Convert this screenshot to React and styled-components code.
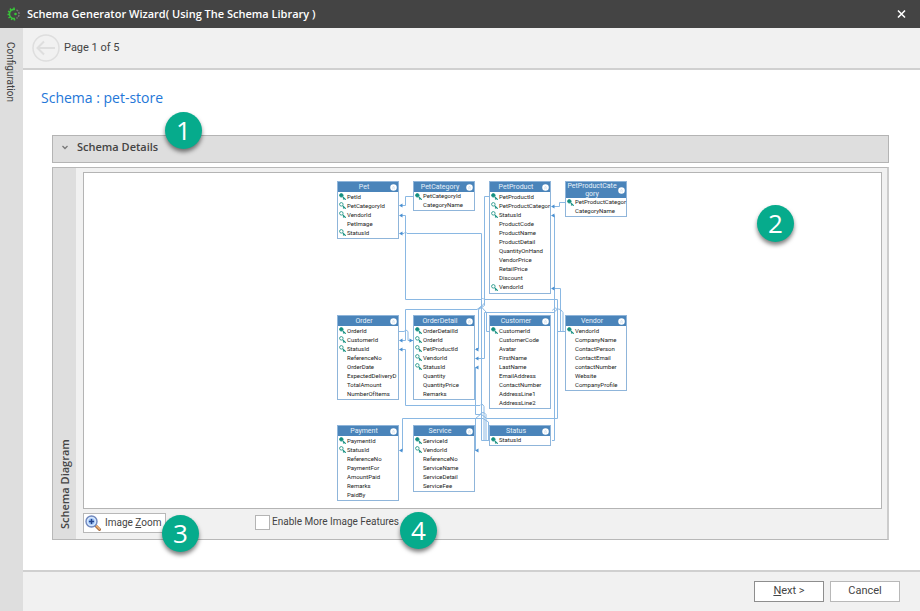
import React from "react";
import styled, { createGlobalStyle } from "styled-components";

const GlobalStyle = createGlobalStyle`
  *, *::before, *::after { box-sizing: border-box; }
  body {
    margin: 0;
    background: #fff;
    color: #444;
    font-family: Roboto, "Open Sans", sans-serif;
    font-size: 11px;
    line-height: 16px;
  }
  button, input { font: inherit; color: inherit; }
`;

const Window = styled.div`
  min-height: 100vh;
  display: flex;
  flex-direction: column;
`;

const TitleBar = styled.header`
  height: 28px;
  display: flex;
  align-items: center;
  gap: 6px;
  padding: 0 10px 0 7px;
  background: #444;
  color: #fff;
`;

const Title = styled.h1`
  flex: 1;
  margin: 0;
  font-family: "Open Sans", sans-serif;
  font-size: 11px;
  font-weight: 600;
`;

const IconButton = styled.button`
  display: flex;
  padding: 0;
  border: 0;
  background: none;
`;

const Workspace = styled.div`
  flex: 1;
  display: flex;
`;

const ConfigTab = styled.button`
  width: 23px;
  padding: 14px 3px 0 0;
  border: 0;
  background: #dedede;
  color: #444;
  font-size: 10px;
  writing-mode: vertical-rl;
  text-align: left;
  line-height: 20px;
`;

const Main = styled.main`
  flex: 1;
  min-width: 0;
  display: flex;
  flex-direction: column;
`;

const PageBar = styled.nav`
  height: 42px;
  display: flex;
  align-items: center;
  gap: 4px;
  padding: 0 9px;
  background: #f1f1f1;
  border-bottom: 2px solid #d0d0d0;
`;

const Content = styled.section`
  flex: 1;
  display: flex;
  flex-direction: column;
  padding: 18px 31px 30px 29px;
`;

const SchemaTitle = styled.h2`
  margin: 0 0 27px -11px;
  color: #2477d8;
  font-family: "Open Sans", sans-serif;
  font-size: 14px;
  font-weight: 400;
  line-height: 20px;
`;

const DetailsPanel = styled.div`
  position: relative;
  height: 28px;
  margin-bottom: 4px;
  border: 1px solid #b4b4b4;
  background: #dedede;
`;

const DetailsToggle = styled.button`
  width: 100%;
  height: 22px;
  display: flex;
  align-items: center;
  gap: 8px;
  padding: 0 8px;
  border: 0;
  background: none;
  font-family: "Open Sans", sans-serif;
  font-weight: 600;
`;

const DiagramPanel = styled.div`
  flex: 1;
  display: flex;
  border: 1px solid #b8b8b8;
  border-right: 2px solid #ccc;
  background: #f1f1f1;
`;

const DiagramTab = styled.div`
  width: 23px;
  padding-top: 10px;
  background: #dedede;
  font-family: "Open Sans", sans-serif;
  font-weight: 600;
  line-height: 23px;
  writing-mode: vertical-rl;
  transform: rotate(180deg);
`;

const DiagramBody = styled.div`
  flex: 1;
  min-width: 0;
  display: flex;
  flex-direction: column;
  padding: 4px 5px 6px 7px;
`;

const Canvas = styled.div`
  position: relative;
  flex: 1;
  display: flex;
  justify-content: center;
  padding: 7px 0 6px;
  border: 1px solid #b4b4b4;
  background: #fff;
`;

const Diagram = styled.div`
  position: relative;
  width: 291px;
  height: 322px;
`;

const Wires = styled.svg`
  position: absolute;
  inset: 0;
  fill: none;
  stroke: #8ab8e3;
`;

const EntityBox = styled.article`
  position: absolute;
  left: ${(p) => p.$x}px;
  top: ${(p) => p.$y}px;
  width: 62px;
  height: ${(p) => p.$h}px;
  display: flex;
  flex-direction: column;
  border: 1px solid #8fb5da;
  background: #fff;
`;

const EntityHeader = styled.header`
  flex: none;
  height: ${(p) => (p.$tall ? 16 : 10)}px;
  display: flex;
  align-items: center;
  padding-right: 1px;
  background: #4a84ba;
  color: #e8f1f9;
  font-size: 7px;
  line-height: 8px;
  text-align: center;
`;

const EntityName = styled.span`
  flex: 1;
  min-width: 0;
`;

const FieldList = styled.ul`
  flex: 1;
  display: flex;
  flex-direction: column;
  margin: 0;
  padding: 0 0 1px;
  list-style: none;
`;

const Field = styled.li`
  flex: 1;
  display: flex;
  align-items: center;
  gap: 1px;
  padding-left: 1px;
  color: #222;
  font-size: 6px;
  line-height: 8px;
  white-space: nowrap;
`;

const KeySlot = styled.svg`
  flex: none;
  width: 7px;
  height: 7px;
  stroke: #159080;
  fill: ${(p) => (p.$solid ? "#159080" : "none")};
`;

const Tools = styled.div`
  display: flex;
  align-items: flex-start;
  gap: 89px;
  padding-top: 4px;
  font-size: 10px;
`;

const ToolSlot = styled.div`
  position: relative;
  display: flex;
`;

const ZoomButton = styled.button`
  width: 83px;
  height: 20px;
  display: flex;
  align-items: center;
  gap: 4px;
  padding: 0 1px;
  border: 1px solid #b8b8b8;
  background: #fff;
  white-space: nowrap;
`;

const CheckLabel = styled.label`
  display: flex;
  align-items: center;
  gap: 2px;
  padding-top: 1px;
  white-space: nowrap;
`;

const CheckBox = styled.input`
  appearance: none;
  width: 15px;
  height: 15px;
  margin: 0;
  border: 1px solid #b4b4b4;
  background: #fff;
  &:checked { background: #06ab8c; }
`;

const Footer = styled.footer`
  height: 42px;
  display: flex;
  align-items: center;
  justify-content: flex-end;
  gap: 6px;
  padding: 0 20px 2px;
  border-top: 2px solid #d0d0d0;
  background: #f1f1f1;
`;

const FooterButton = styled.button`
  width: 70px;
  height: 21px;
  padding: 0;
  border: 1px solid ${(p) => (p.$primary ? "#8e8e8e" : "#b8b8b8")};
  background: #fff;
`;

const Badge = styled.span`
  position: absolute;
  left: ${(p) => p.$left};
  top: ${(p) => p.$top};
  width: 37px;
  height: 37px;
  border-radius: 50%;
  background: #06ab8c;
  box-shadow: 0 3px 4px rgba(0, 0, 0, 0.5);
  color: #fff;
  font-family: "Open Sans", sans-serif;
  font-size: 26px;
  line-height: 37px;
  text-align: center;
`;

const ENTITIES = [
  { name: "Pet", x: 0, y: 1, h: 58, fields: ["**PetId", "*PetCategoryId", "*VendorId", "PetImage", "*StatusId"] },
  { name: "PetCategory", x: 76, y: 1, h: 30, fields: ["**PetCategoryId", "CategoryName"] },
  {
    name: "PetProduct", x: 152, y: 1, h: 113,
    fields: ["**PetProductId", "*PetProductCategor", "*StatusId", "ProductCode", "ProductName", "ProductDetail", "QuantityOnHand", "VendorPrice", "RetailPrice", "Discount", "*VendorId"],
  },
  { name: "PetProductCategory", x: 228, y: 1, h: 36, tall: true, fields: ["**PetProductCategor", "CategoryName"] },
  {
    name: "Order", x: 0, y: 135, h: 85,
    fields: ["**OrderId", "*CustomerId", "*StatusId", "ReferenceNo", "OrderDate", "ExpectedDeliveryD", "TotalAmount", "NumberOfItems"],
  },
  {
    name: "OrderDetail", x: 76, y: 135, h: 85,
    fields: ["**OrderDetailId", "*OrderId", "*PetProductId", "*VendorId", "*StatusId", "Quantity", "QuantityPrice", "Remarks"],
  },
  {
    name: "Customer", x: 152, y: 135, h: 94,
    fields: ["**CustomerId", "CustomerCode", "Avatar", "FirstName", "LastName", "EmailAddress", "ContactNumber", "AddressLine1", "AddressLine2"],
  },
  {
    name: "Vendor", x: 228, y: 135, h: 76,
    fields: ["**VendorId", "CompanyName", "ContactPerson", "ContactEmail", "contactNumber", "Website", "CompanyProfile"],
  },
  {
    name: "Payment", x: 0, y: 245, h: 76,
    fields: ["**PaymentId", "*StatusId", "ReferenceNo", "PaymentFor", "AmountPaid", "Remarks", "PaidBy"],
  },
  {
    name: "Service", x: 76, y: 245, h: 67,
    fields: ["**ServiceId", "*VendorId", "ReferenceNo", "ServiceName", "ServiceDetail", "ServiceFee"],
  },
  { name: "Status", x: 152, y: 245, h: 21, fields: ["**StatusId"] },
];

const WIRE_PATHS = [
  "M77 16.5H68.5V25.5H64",
  "M64 35.5H68.5V119.5H144q1.5-3 3 0H220.5V151.5H229",
  "M64 53.5H67q1.5-3 3 0H144.5V260.5H152",
  "M153 16.5H147.5V125.5L141.5 129.5V168.5H139",
  "M229 22.5H222.5V26.5H215",
  "M215 35.5H217.5V260.5H215",
  "M215 108.5H223.5V151.5H229",
  "M64 160.5H68.5V129.5H140L144 126.5L149.5 132.5V151.5H153",
  "M62 151.5H67q2-3 4 0V160.5H76",
  "M64 169.5H68.5V225.5H143q2-3 4 1V260.5H152",
  "M139 178.5H147.5V132.5H217q5-7 9 0V151.5H229",
  "M138.5 187.5V234.5H143q3-4 6 0V260.5H152",
  "M64 270.5H65.5V238.5H146L151.5 242V260.5",
  "M138.5 270.5V238.5L144 234L149.5 238.5H220.5V130.5q-2-5-5 0",
  "M144.5 54V119M141.5 129.5L147.5 123",
];

const ARROWS = [
  [62, 25.5], [62, 35.5], [62, 53.5], [62, 160.5], [62, 169.5], [62, 270.5],
  [214, 26.5], [214, 35.5], [214, 108.5],
  [138, 169.5], [138, 178.5], [138, 187.5], [138, 270.5],
];

function KeyIcon({ kind }) {
  return (
    <KeySlot viewBox="0 0 12 12" $solid={kind === 2} aria-hidden="true">
      {kind > 0 && (
        <g strokeWidth="1.4">
          <circle cx="4" cy="4" r="3" />
          <path d="M6.5 6.5L11.5 11.5M9 9L7 11" strokeWidth="2" />
        </g>
      )}
    </KeySlot>
  );
}

function Entity({ name, x, y, h, tall, fields }) {
  return (
    <EntityBox $x={x} $y={y} $h={h}>
      <EntityHeader $tall={tall}>
        <EntityName>{tall ? <>PetProductCate<wbr />gory</> : name}</EntityName>
        <svg width="7" height="7" viewBox="0 0 14 14" aria-hidden="true">
          <circle cx="7" cy="7" r="6.5" fill="#fff" />
          <path d="M4.5 7L7 5L9.5 7M4.5 10L7 8L9.5 10" fill="none" stroke="#a5c3df" />
        </svg>
      </EntityHeader>
      <FieldList>
        {fields.map((field) => {
          const text = field.replace(/^\*+/, "");
          return (
            <Field key={text}>
              <KeyIcon kind={field.length - text.length} />
              {text}
            </Field>
          );
        })}
      </FieldList>
    </EntityBox>
  );
}

function LogoIcon() {
  return (
    <svg width="14" height="14" viewBox="0 0 14 14" fill="none" aria-hidden="true">
      <path d="M8 2.5A4.6 4.6 0 1 0 8 11.5" stroke="#3ac43a" strokeWidth="1.6" />
      <path d="M7 2V0.5M4 3L3 1.5M2.5 5L1 4.3M2.2 7.5H0.5M2.8 10L1.5 11M5 11.5L4.3 13M7.5 12V13.5" stroke="#3ac43a" strokeWidth="1.5" />
      <path d="M9.5 2.8A4.8 4.8 0 0 1 9.5 11.3" stroke="#777" strokeWidth="1.5" strokeDasharray="2 1" />
      <circle cx="8.5" cy="7" r="1.3" fill="#3ac43a" />
    </svg>
  );
}

const MagnifierSvg = styled.svg`
  flex: none;
`;

function MagnifierIcon() {
  return (
    <MagnifierSvg width="16" height="16" viewBox="0 0 16 16" fill="none" aria-hidden="true">
      <path d="M10.5 10.5L14.5 14.5" stroke="#a76f43" strokeWidth="3" strokeLinecap="round" />
      <path d="M11 10.5L14.5 14" stroke="#f0b070" strokeWidth="1.5" strokeLinecap="round" />
      <circle cx="6.5" cy="6.5" r="5.5" fill="#c3dcfa" stroke="#7188bd" strokeWidth="1.4" />
      <circle cx="6.5" cy="6.5" r="4" fill="#9fc5f8" stroke="#e6f1ff" />
      <path d="M6.5 4V9M4 6.5H9" stroke="#25448c" strokeWidth="1.5" />
    </MagnifierSvg>
  );
}

export default function App() {
  return (
    <>
      <GlobalStyle />
      <Window>
        <TitleBar>
          <LogoIcon />
          <Title>Schema Generator Wizard( Using The Schema Library )</Title>
          <IconButton type="button" aria-label="Close">
            <svg width="17" height="14" viewBox="0 0 17 14" aria-hidden="true">
              <path d="M5 3.5L12 10.5M12 3.5L5 10.5" stroke="#fff" strokeWidth="1.6" />
            </svg>
          </IconButton>
        </TitleBar>
        <Workspace>
          <ConfigTab type="button">Configuration</ConfigTab>
          <Main>
            <PageBar>
              <IconButton type="button" aria-label="Previous page">
                <svg width="28" height="28" viewBox="0 0 28 28" fill="none" stroke="#dedede" strokeWidth="1.5" aria-hidden="true">
                  <circle cx="14" cy="14" r="13" />
                  <path d="M23 14H6M12 7.5L5.5 14L12 20.5" strokeWidth="2" />
                </svg>
              </IconButton>
              <span>Page 1 of 5</span>
            </PageBar>
            <Content>
              <SchemaTitle>Schema : pet-store</SchemaTitle>
              <DetailsPanel>
                <DetailsToggle type="button" aria-expanded="false">
                  <svg width="8" height="8" viewBox="0 0 8 8" fill="none" aria-hidden="true">
                    <path d="M1.5 3L4 5.5L6.5 3" stroke="#777" strokeWidth="1.3" />
                  </svg>
                  Schema Details
                </DetailsToggle>
                <Badge $left="112px" $top="-24px">1</Badge>
              </DetailsPanel>
              <DiagramPanel>
                <DiagramTab>Schema Diagram</DiagramTab>
                <DiagramBody>
                  <Canvas>
                    <Diagram>
                      <Wires width="292" height="322" viewBox="0 0 292 322" aria-hidden="true">
                        {WIRE_PATHS.map((d) => <path key={d} d={d} />)}
                      </Wires>
                      {ENTITIES.map((e) => <Entity key={e.name} {...e} />)}
                      <Wires width="292" height="322" viewBox="0 0 292 322" aria-hidden="true">
                        {ARROWS.map(([x, y]) => (
                          <path key={`${x}-${y}`} d={`M${x} ${y}l3.5-2v4z`} fill="#4a90d2" stroke="none" />
                        ))}
                        <path d="M76 160.5l-3.5-2v4z" fill="#4a90d2" stroke="none" />
                      </Wires>
                    </Diagram>
                    <Badge $left="calc(100% - 124px)" $top="32px">2</Badge>
                  </Canvas>
                  <Tools>
                    <ToolSlot>
                      <ZoomButton type="button">
                        <MagnifierIcon />
                        <span>Image <u>Z</u>oom</span>
                      </ZoomButton>
                      <Badge $left="79px" $top="2px">3</Badge>
                    </ToolSlot>
                    <ToolSlot>
                      <CheckLabel>
                        <CheckBox type="checkbox" />
                        Enable More Image Features
                      </CheckLabel>
                      <Badge $left="145px" $top="-1px">4</Badge>
                    </ToolSlot>
                  </Tools>
                </DiagramBody>
              </DiagramPanel>
            </Content>
            <Footer>
              <FooterButton type="button" $primary><u>N</u>ext &gt;</FooterButton>
              <FooterButton type="button">Cancel</FooterButton>
            </Footer>
          </Main>
        </Workspace>
      </Window>
    </>
  );
}
